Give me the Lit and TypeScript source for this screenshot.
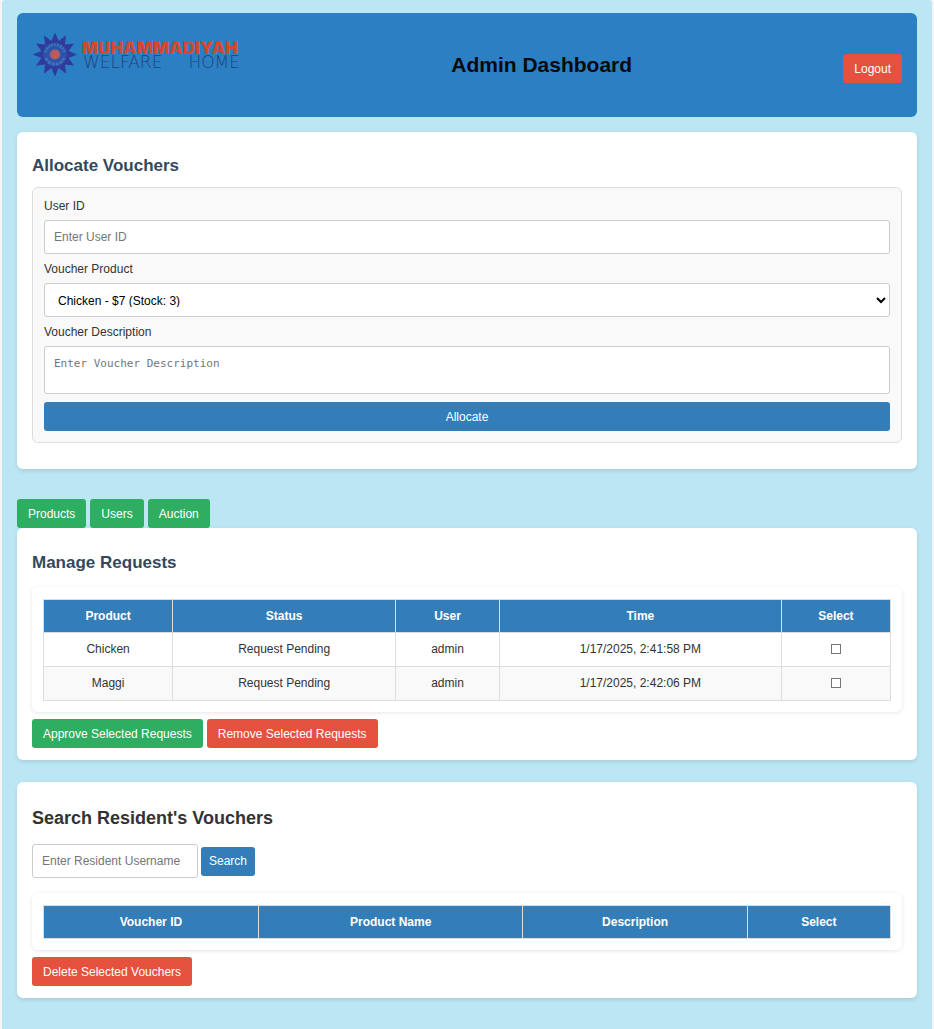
import { LitElement, html, css, svg } from "lit";
import { customElement, state } from "lit/decorators.js";

interface VoucherRequest {
  product: string;
  status: string;
  user: string;
  time: string;
}

@customElement("welfare-logo")
export class WelfareLogo extends LitElement {
  static styles = css`
    :host {
      display: block;
    }
    .logo {
      display: block;
      width: 208px;
      height: 74px;
      overflow: visible;
    }
    .name {
      font: 900 17px Inter, sans-serif;
      fill: #d04a30;
    }
    .tag {
      font: 200 17px "DejaVu Sans", sans-serif;
      fill: #233f7e;
    }
  `;

  private rays() {
    const pts: string[] = [];
    for (let i = 0; i < 24; i++) {
      const r = i % 2 === 0 ? 22 : 14;
      const a = (i * Math.PI) / 12 - Math.PI / 2;
      pts.push(`${(23 + r * Math.cos(a)).toFixed(2)},${(26.5 + r * Math.sin(a)).toFixed(2)}`);
    }
    return pts.join(" ");
  }

  render() {
    return html`<svg class="logo" viewBox="0 0 208 74" role="img" aria-label="Muhammadiyah Welfare Home">
      <polygon points=${this.rays()} fill="#2f3a9c" />
      ${svg`
        <circle cx="23" cy="26.5" r="12" fill="#2f50a8" />
        <path d="M13.5 24.5a9.7 9.7 0 0 1 19 0" fill="none" stroke="#3b74b8" stroke-width="3" stroke-dasharray="2 1" />
        <path d="M14 30a9.7 9.7 0 0 0 18 0" fill="none" stroke="#3b74b8" stroke-width="3" stroke-dasharray="3 1" />
        <circle cx="23" cy="26.5" r="7" fill="#3454a8" />
        <circle cx="23" cy="26.5" r="5" fill="#a9606f" />
        <path d="M19.5 27.5c2-3 3 2 7-2M20.5 24.5l4-1M21.5 29.5l4-1" fill="none" stroke="#d0563f" stroke-width="1.4" />
      `}
      <text class="name" x="50" y="26">MUHAMMADIYAH</text>
      <text class="tag" x="51" y="40">WELFARE</text>
      <text class="tag" x="208" y="40" text-anchor="end">HOME</text>
    </svg>`;
  }
}

@customElement("app-root")
export class AppRoot extends LitElement {
  static styles = css`
    :host {
      display: block;
      padding: 0 2px;
      background: #f4f4f4;
      color: #333;
      font: 12px/14px "Liberation Sans", Arial, sans-serif;
    }
    * {
      box-sizing: border-box;
    }
    .page {
      min-height: 100vh;
      padding: 13px 15px 31px;
      background: #bbe6f3;
      border-radius: 3px 3px 0 0;
    }
    .header {
      display: flex;
      justify-content: space-between;
      align-items: center;
      padding: 15px;
      margin-bottom: 15px;
      background: #2b7fc3;
      border-radius: 6px;
    }
    .title {
      margin: 0;
      font-size: 21px;
      line-height: 24px;
      color: #0a0a0a;
    }
    .card {
      padding: 15px 15px 12px;
      background: #fff;
      border-radius: 6px;
      box-shadow: 0 2px 4px rgba(0, 0, 0, 0.1);
    }
    .card.allocate {
      padding-bottom: 26px;
      margin-bottom: 30px;
    }
    .card.requests {
      margin-bottom: 22px;
    }
    .heading {
      margin: 10px 0 14px;
      font-size: 17px;
      line-height: 20px;
      color: #34495e;
    }
    .allocate .heading {
      margin: 9px 0 11px;
    }
    .heading.dark {
      font-size: 18px;
      color: #333;
      margin: 11px 0 16px;
    }
    .form {
      display: flex;
      flex-direction: column;
      padding: 11px;
      background: #f9f9f9;
      border: 1px solid #ddd;
      border-radius: 6px;
    }
    .form label {
      margin-bottom: 7px;
    }
    .field {
      height: 34px;
      margin: 0 0 8px;
      padding: 9px;
      border: 1px solid #ccc;
      border-radius: 3px;
      background: #fff;
      color: #000;
      font: inherit;
    }
    .field::placeholder {
      color: #757575;
    }
    .area {
      height: 48px;
      resize: none;
      font: 11px/16px "DejaVu Sans Mono", monospace;
    }
    .btn {
      height: 29px;
      padding: 0 11px;
      border: 0;
      border-radius: 3px;
      background: #337eb8;
      color: #fff;
      font: inherit;
      cursor: pointer;
    }
    .btn.green {
      background: #2eae61;
    }
    .btn.red {
      background: #e5513f;
    }
    .btn.narrow {
      padding: 0 8px;
    }
    .btn.logout {
      margin-top: 7px;
    }
    .tabs,
    .actions {
      display: flex;
      gap: 4px;
    }
    .search {
      display: flex;
      align-items: center;
      gap: 3px;
      margin-bottom: 15px;
    }
    .search .field {
      width: 166px;
      margin: 0;
    }
    .panel {
      padding: 12px 11px 11px;
      margin-bottom: 7px;
      border-radius: 6px;
      box-shadow: 0 1px 4px rgba(0, 0, 0, 0.1);
    }
    .grid {
      width: 100%;
      border-collapse: collapse;
      text-align: center;
    }
    .grid th,
    .grid td {
      height: 34px;
      padding: 0 9px 2px;
      border: 1px solid #ddd;
    }
    .grid th {
      height: 33px;
      padding-bottom: 0;
      background: #337eb8;
      color: #fff;
    }
    .grid tbody tr:nth-child(even) {
      background: #f9f9f9;
    }
    .tick {
      display: block;
      appearance: none;
      width: 10px;
      height: 10px;
      margin: 0 auto;
      border: 1px solid #767676;
      background: #fff;
    }
    .tick:checked {
      background: #337eb8;
    }
  `;

  @state() private requests: VoucherRequest[] = [
    { product: "Chicken", status: "Request Pending", user: "admin", time: "1/17/2025, 2:41:58 PM" },
    { product: "Maggi", status: "Request Pending", user: "admin", time: "1/17/2025, 2:42:06 PM" },
  ];

  private head(names: string[]) {
    return html`<thead>
      <tr>
        ${names.map((n) => html`<th scope="col">${n}</th>`)}
      </tr>
    </thead>`;
  }

  render() {
    return html`
      <main class="page">
        <header class="header">
          <welfare-logo></welfare-logo>
          <h1 class="title">Admin Dashboard</h1>
          <button class="btn red logout" type="button">Logout</button>
        </header>

        <section class="card allocate">
          <h2 class="heading">Allocate Vouchers</h2>
          <form class="form" @submit=${(e: Event) => e.preventDefault()}>
            <label for="user">User ID</label>
            <input class="field" id="user" type="text" placeholder="Enter User ID" />
            <label for="product">Voucher Product</label>
            <select class="field" id="product">
              <option>Chicken - $7 (Stock: 3)</option>
            </select>
            <label for="description">Voucher Description</label>
            <textarea class="field area" id="description" placeholder="Enter Voucher Description"></textarea>
            <button class="btn" type="submit">Allocate</button>
          </form>
        </section>

        <nav class="tabs">
          <button class="btn green" type="button">Products</button>
          <button class="btn green" type="button">Users</button>
          <button class="btn green" type="button">Auction</button>
        </nav>

        <section class="card requests">
          <h2 class="heading">Manage Requests</h2>
          <div class="panel">
            <table class="grid">
              ${this.head(["Product", "Status", "User", "Time", "Select"])}
              <tbody>
                ${this.requests.map(
                  (r) => html`<tr>
                    <td>${r.product}</td>
                    <td>${r.status}</td>
                    <td>${r.user}</td>
                    <td>${r.time}</td>
                    <td><input class="tick" type="checkbox" aria-label="Select ${r.product}" /></td>
                  </tr>`
                )}
              </tbody>
            </table>
          </div>
          <div class="actions">
            <button class="btn green" type="button">Approve Selected Requests</button>
            <button class="btn red" type="button">Remove Selected Requests</button>
          </div>
        </section>

        <section class="card">
          <h2 class="heading dark">Search Resident's Vouchers</h2>
          <div class="search">
            <input class="field" type="text" aria-label="Resident username" placeholder="Enter Resident Username" />
            <button class="btn narrow" type="button">Search</button>
          </div>
          <div class="panel">
            <table class="grid">
              ${this.head(["Voucher ID", "Product Name", "Description", "Select"])}
            </table>
          </div>
          <div class="actions">
            <button class="btn red" type="button">Delete Selected Vouchers</button>
          </div>
        </section>
      </main>
    `;
  }
}
